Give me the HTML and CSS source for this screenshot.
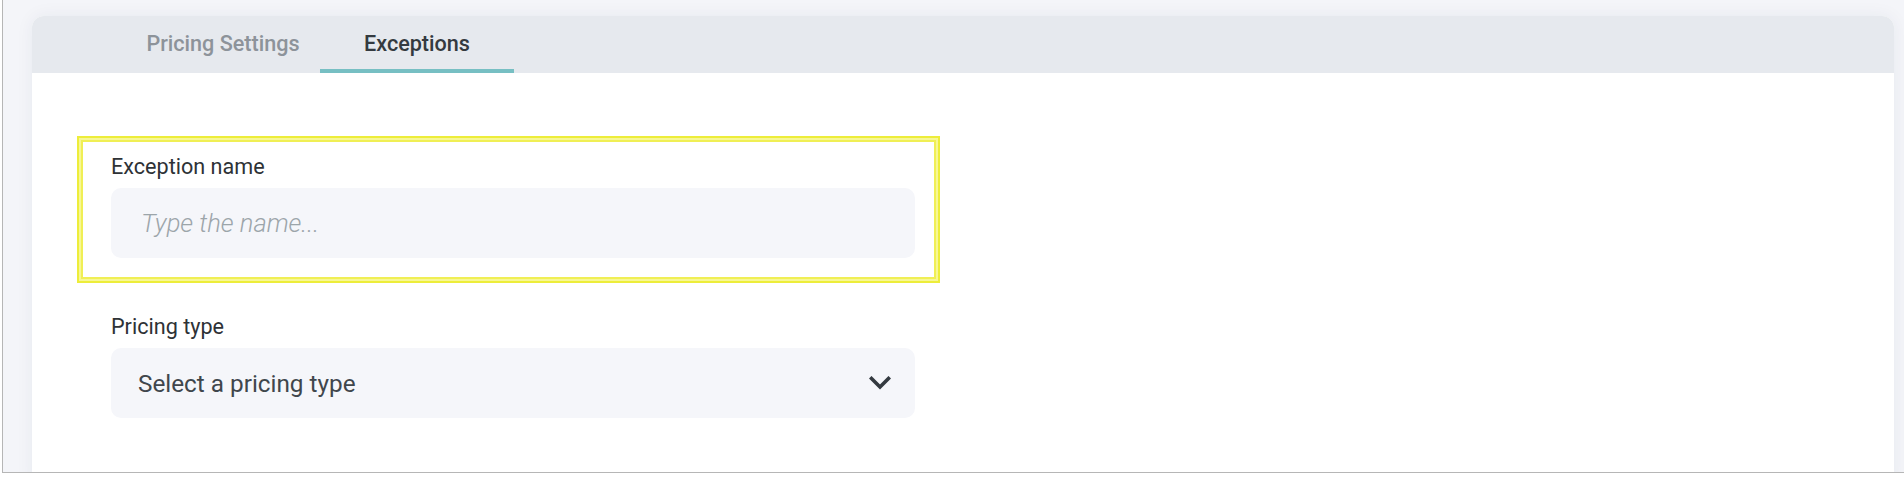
FILE: index.html
```html
<!DOCTYPE html>
<html lang="en">
<head>
<meta charset="utf-8">
<title>Exceptions</title>
<link rel="stylesheet" href="styles.css">
</head>
<body>
<div class="window">
  <div class="card">
    <nav class="tabs">
      <div class="tab">Pricing Settings</div>
      <div class="tab tab-active">Exceptions</div>
    </nav>
    <form class="form">
      <div class="field field-highlight">
        <label class="label" for="exname">Exception name</label>
        <input class="input" id="exname" type="text" placeholder="Type the name...">
      </div>
      <div class="field">
        <label class="label">Pricing type</label>
        <div class="select">
          <span class="select-text">Select a pricing type</span>
          <svg class="chevron" width="22" height="14" viewBox="0 0 22 14"><polyline points="2.5,2.5 11,11 19.5,2.5" fill="none" stroke="#343a40" stroke-width="3.6" stroke-linecap="square" stroke-linejoin="miter"/></svg>
        </div>
      </div>
    </form>
  </div>
</div>
</body>
</html>
```

FILE: styles.css
```css
* { box-sizing: border-box; }
html, body { margin: 0; padding: 0; background: #ffffff; }
body { font-family: Roboto, "Noto Sans", sans-serif; }

.window {
  margin-left: 2px;
  height: 473px;
  border-left: 1px solid #b6b6b6;
  border-bottom: 1px solid #b6b6b6;
  background: #f4f5f9;
  padding: 16px 10px 0 29px;
  overflow: hidden;
}

.card {
  background: #ffffff;
  border-radius: 12px 12px 0 0;
  height: 470px;
  box-shadow: 0 0 18px rgba(40, 50, 90, 0.06);
  overflow: hidden;
}

.tabs {
  display: flex;
  height: 57px;
  background: #e6e9ee;
  padding-left: 94px;
}

.tab {
  width: 194px;
  text-align: center;
  font-size: 21.6px;
  font-weight: 500;
  color: #8d939a;
  padding-top: 15px;
  border-bottom: 4px solid transparent;
}

.tab-active {
  color: #343a40;
  border-bottom-color: #77bfc3;
}

.form {
  padding: 63px 0 0 45px;
  display: flex;
  flex-direction: column;
  gap: 13px;
}

.field {
  width: 863px;
  display: flex;
  flex-direction: column;
  padding: 16px 23px 23px 32px;
  gap: 9px;
  border: 2px solid transparent;
}

.field-highlight {
  border-color: #eded3a;
  box-shadow: inset 0 0 0 2px #f7f794, inset 0 0 0 4px #f0ef55;
}

.label {
  font-size: 21.6px;
  line-height: 25px;
  color: #2e3236;
}

.input {
  height: 70px;
  border: none;
  border-radius: 10px;
  background: #f5f6fa;
  padding: 0 30px;
  font-family: Roboto, sans-serif;
  font-size: 25.5px;
  color: #343a40;
  outline: none;
}

.input::placeholder {
  color: #9ca5aa;
  font-style: italic;
  font-weight: 300;
}

.select {
  height: 70px;
  border-radius: 10px;
  background: #f5f6fa;
  display: flex;
  align-items: center;
  justify-content: space-between;
  padding: 0 24px 0 27px;
}

.select-text {
  font-size: 24.3px;
  color: #40464c;
}

.chevron { display: block; }
```
